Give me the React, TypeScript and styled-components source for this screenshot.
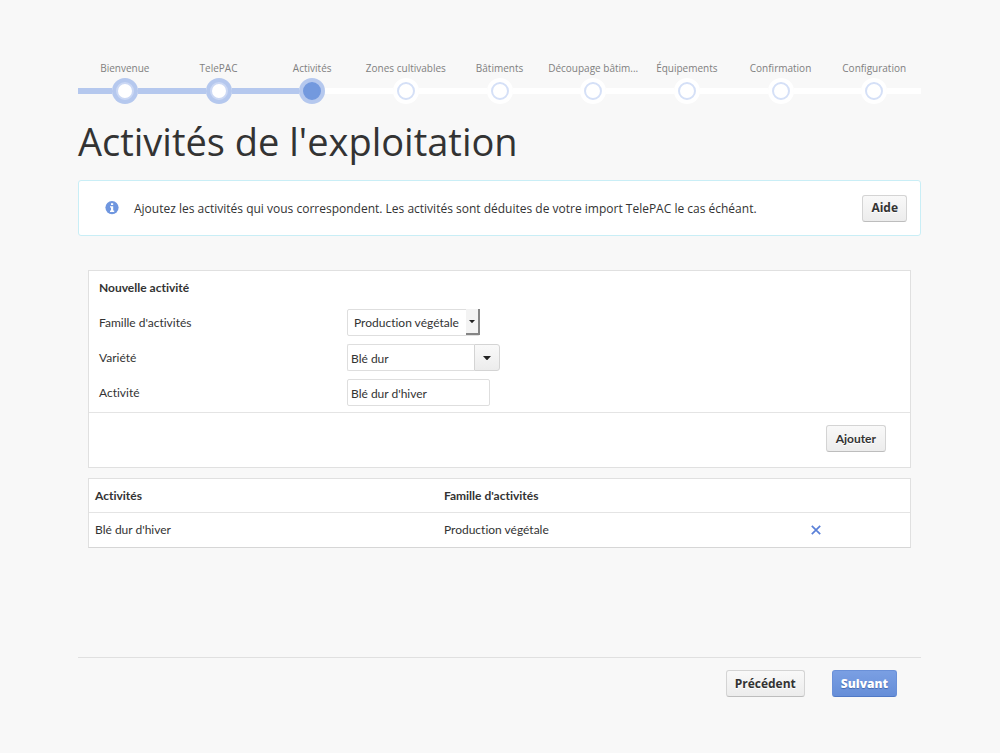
import React from "react";
import styled, { createGlobalStyle, css } from "styled-components";

const GlobalStyle = createGlobalStyle`
  *, *::before, *::after { box-sizing: border-box; }
  body {
    margin: 0;
    background: #f8f8f8;
    color: #333;
    font-family: "Open Sans", "Noto Sans", sans-serif;
    font-size: 12px;
    font-variant-ligatures: none;
  }
`;

const Page = styled.main`
  padding: 60px 79px 56px 78px;
`;

const Steps = styled.ol`
  display: flex;
  list-style: none;
  margin: 0;
  padding: 0;
`;

const Step = styled.li`
  flex: 1;
  min-width: 0;
`;

const StepLabel = styled.div`
  height: 16px;
  margin-bottom: 2px;
  font-size: 10px;
  line-height: 16px;
  color: #808080;
  text-align: center;
  white-space: nowrap;
`;

const Track = styled.div`
  display: flex;
  align-items: center;
`;

const Line = styled.span<{ $done: boolean }>`
  flex: 1;
  height: 6px;
  background: ${(p) => (p.$done ? "#b5c8ee" : "#fff")};
`;

type StepState = "done" | "current" | "todo";

const Dot = styled.span<{ $state: StepState }>`
  flex: none;
  display: grid;
  place-items: center;
  width: 26px;
  height: 26px;
  border-radius: 50%;
  background: ${(p) => (p.$state === "todo" ? "#fff" : "#b5c8ee")};

  &::after {
    content: "";
    width: 18px;
    height: 18px;
    border-radius: 50%;
    border: 2px solid ${(p) => (p.$state === "current" ? "#7399de" : p.$state === "done" ? "#cbd8f4" : "#d5e0f7")};
    background: ${(p) => (p.$state === "current" ? "#7399de" : "#fff")};
  }
`;

const Title = styled.h1`
  margin: 12px 0 14px;
  font-size: 38px;
  line-height: 50px;
  font-weight: 400;
`;

const Notice = styled.section`
  display: flex;
  align-items: center;
  gap: 15px;
  height: 56px;
  padding: 0 13px 0 26px;
  margin-bottom: 34px;
  border: 1px solid #c9eef6;
  border-radius: 3px;
  background: #fff;
`;

const NoticeText = styled.p`
  flex: 1;
  margin: 0;
`;

const Button = styled.button<{ $primary?: boolean; $lato?: boolean }>`
  height: 27px;
  padding: ${(p) => (p.$lato ? "1px 9px 0" : "0 8px")};
  border: 1px solid #d4d4d4;
  border-bottom-color: #bdbdbd;
  border-radius: 3px;
  background: linear-gradient(#f9f9f9, #ececec);
  color: #333;
  font: 700 12px/18px ${(p) => (p.$lato ? '"Lato"' : '"Open Sans"')}, sans-serif;
  text-shadow: 0 1px 0 #fff;
  cursor: pointer;

  ${(p) =>
    p.$primary &&
    css`
      border-color: #6a90d8;
      border-bottom-color: #5079c6;
      background: linear-gradient(#7a9fe3, #668ed8);
      color: #fff;
      font-weight: 800;
      text-shadow: 0 1px 1px #4468ad;
    `}
`;

const Content = styled.div`
  display: grid;
  gap: 10px;
  margin: 0 10px;
  font-family: "Lato", sans-serif;
`;

const Form = styled.form`
  border: 1px solid #e0e0e0;
  background: #fff;
`;

const Fields = styled.div`
  padding: 8px 10px 6px;
  border-bottom: 1px solid #e4e4e4;
`;

const FormTitle = styled.h2`
  margin: 0;
  font-size: 12px;
  line-height: 18px;
  font-weight: 700;
`;

const Field = styled.div`
  display: grid;
  grid-template-columns: 248px 1fr;
  align-items: center;
  height: 27px;
  margin-top: 8px;

  ${FormTitle} + & {
    margin-top: 12px;
  }
`;

const boxed = css`
  height: 27px;
  border: 1px solid #dedede;
  border-radius: 2px;
  background: #fff;
  color: #333;
  font: 12px/18px "Lato", sans-serif;
  font-variant-ligatures: none;
`;

const TextInput = styled.input<{ $joined?: boolean }>`
  ${boxed}
  width: ${(p) => (p.$joined ? 127 : 143)}px;
  padding: 2px 3px 0;
  ${(p) => p.$joined && "border-radius: 2px 0 0 2px; border-right: 0;"}
`;

const Picker = styled.div`
  display: flex;
`;

const SelectWrap = styled.div`
  display: grid;
  justify-self: start;

  > * {
    grid-area: 1 / 1;
  }
`;

const Select = styled.select`
  ${boxed}
  appearance: none;
  width: 133px;
  padding: 1px 14px 0 6px;
`;

const SelectArrow = styled.span`
  display: grid;
  place-items: center;
  justify-self: end;
  width: 14px;
  height: 26px;
  border: solid #858585;
  border-width: 0 2px 2px 0;
  background: #f3f3f3;
  pointer-events: none;
`;

const PickerButton = styled.button`
  display: grid;
  place-items: center;
  width: 26px;
  height: 27px;
  padding: 0;
  border: 1px solid #d4d4d4;
  border-radius: 0 3px 3px 0;
  background: linear-gradient(#f9f9f9, #ececec);
`;

const FormActions = styled.div`
  display: flex;
  justify-content: flex-end;
  padding: 12px 24px 15px;
`;

const Table = styled.table`
  width: 100%;
  table-layout: fixed;
  border-collapse: separate;
  border-spacing: 0;
  border: 1px solid #e0e0e0;
  border-bottom-color: #d6d6d6;
  background: #fff;

  th,
  td {
    padding: 0 6px;
    text-align: left;
  }

  th {
    height: 34px;
    border-bottom: 1px solid #e4e4e4;
  }

  td {
    height: 34px;
    padding-bottom: 2px;
  }
`;

const Column = styled.col<{ $width?: string }>`
  width: ${(p) => p.$width ?? "auto"};
`;

const RemoveButton = styled.button`
  display: grid;
  place-items: center;
  width: 22px;
  height: 24px;
  padding: 2px 0 0;
  border: 0;
  background: none;
  cursor: pointer;
`;

const Footer = styled.footer`
  display: flex;
  justify-content: flex-end;
  gap: 27px;
  margin-top: 109px;
  padding: 12px 24px 0;
  border-top: 1px solid #e0e0e0;
`;

const steps = [
  "Bienvenue",
  "TelePAC",
  "Activités",
  "Zones cultivables",
  "Bâtiments",
  "Découpage bâtim...",
  "Équipements",
  "Confirmation",
  "Configuration",
];
const current = 2;

const Caret = ({ width, height }: { width: number; height: number }) => (
  <svg width={width} height={height} viewBox="0 0 8 4" aria-hidden="true">
    <path d="M0 0H8L4.6 3.7Q4 4.2 3.4 3.7Z" fill="#222" />
  </svg>
);

export default function App() {
  return (
    <>
      <GlobalStyle />
      <Page>
        <Steps>
          {steps.map((label, i) => (
            <Step key={label} aria-current={i === current ? "step" : undefined}>
              <StepLabel>{label}</StepLabel>
              <Track>
                <Line $done={i <= current} />
                <Dot $state={i < current ? "done" : i === current ? "current" : "todo"} />
                <Line $done={i < current} />
              </Track>
            </Step>
          ))}
        </Steps>

        <Title>Activités de l'exploitation</Title>

        <Notice>
          <svg width="14" height="14" viewBox="0 0 14 14" aria-hidden="true">
            <circle cx="7" cy="6.6" r="6.6" fill="#6f96df" />
            <path d="M6 2.2h2.2v1.9H6zM5 5.2h3.2v4.4h1v1.5H5V9.6h1v-3H5z" fill="#fff" />
          </svg>
          <NoticeText>
            Ajoutez les activités qui vous correspondent. Les activités sont déduites de votre import TelePAC le cas échéant.
          </NoticeText>
          <Button type="button">Aide</Button>
        </Notice>

        <Content>
          <Form onSubmit={(e) => e.preventDefault()}>
            <Fields>
              <FormTitle>Nouvelle activité</FormTitle>
              <Field>
                <label htmlFor="family">Famille d'activités</label>
                <SelectWrap>
                  <Select id="family">
                    <option>Production végétale</option>
                  </Select>
                  <SelectArrow>
                    <Caret width={6} height={3} />
                  </SelectArrow>
                </SelectWrap>
              </Field>
              <Field>
                <label htmlFor="variety">Variété</label>
                <Picker>
                  <TextInput id="variety" $joined defaultValue="Blé dur" />
                  <PickerButton type="button" aria-label="Choisir une variété">
                    <Caret width={8} height={4} />
                  </PickerButton>
                </Picker>
              </Field>
              <Field>
                <label htmlFor="activity">Activité</label>
                <TextInput id="activity" defaultValue="Blé dur d'hiver" />
              </Field>
            </Fields>
            <FormActions>
              <Button type="submit" $lato>
                Ajouter
              </Button>
            </FormActions>
          </Form>

          <Table>
            <colgroup>
              <Column $width="42.5%" />
              <Column $width="44%" />
              <Column />
            </colgroup>
            <thead>
              <tr>
                <th scope="col">Activités</th>
                <th scope="col">Famille d'activités</th>
                <th aria-label="Actions" />
              </tr>
            </thead>
            <tbody>
              <tr>
                <td>Blé dur d'hiver</td>
                <td>Production végétale</td>
                <td>
                  <RemoveButton type="button" aria-label="Supprimer">
                    <svg width="10" height="10" viewBox="0 0 10 10" aria-hidden="true">
                      <path d="M0.8 0.8l8.4 8.4M9.2 0.8L0.8 9.2" stroke="#5a80d8" strokeWidth="1.7" />
                    </svg>
                  </RemoveButton>
                </td>
              </tr>
            </tbody>
          </Table>
        </Content>

        <Footer>
          <Button type="button">Précédent</Button>
          <Button type="button" $primary>
            Suivant
          </Button>
        </Footer>
      </Page>
    </>
  );
}
